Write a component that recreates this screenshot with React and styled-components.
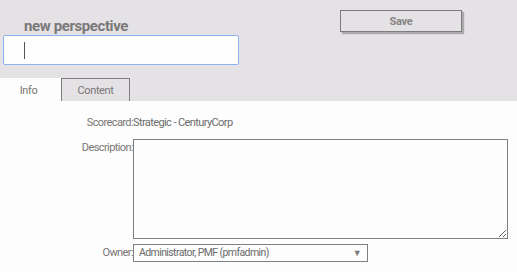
import React from "react";
import styled, { createGlobalStyle } from "styled-components";

const GlobalStyle = createGlobalStyle`
  html, body {
    margin: 0;
    padding: 0;
    background: #fcfdfc;
  }
  body {
    font-family: Roboto, "Liberation Sans", sans-serif;
  }
`;

const Page = styled.div`
  width: 517px;
  height: 272px;
  overflow: hidden;
  background: #fcfdfc;
`;

const Header = styled.header`
  height: 101px;
  background: #e4e2e4;
  display: flex;
  flex-direction: column;
`;

const TopRow = styled.div`
  display: flex;
  align-items: flex-start;
`;

const NameBlock = styled.div`
  display: flex;
  flex-direction: column;
  padding: 17px 0 0 3px;
`;

const Title = styled.h1`
  margin: 0 0 0 21px;
  font-size: 15px;
  line-height: 18px;
  font-weight: 700;
  letter-spacing: -0.4px;
  color: #7a7878;
`;

const NameField = styled.div`
  box-sizing: border-box;
  width: 236px;
  height: 30px;
  border: 1px solid #8db3ee;
  border-radius: 2px;
  background: #fdfefd;
  display: flex;
  align-items: center;
  padding-left: 20px;
`;

const Caret = styled.span`
  display: block;
  width: 1px;
  height: 17px;
  background: #555;
`;

const SaveButton = styled.button`
  box-sizing: border-box;
  margin: 10px 0 0 101px;
  width: 122px;
  height: 22px;
  border: 1px solid #7d7d7d;
  background: #e4e2e4;
  box-shadow: 2px 2px 1px rgba(0, 0, 0, 0.25);
  font-family: Roboto, "Liberation Sans", sans-serif;
  font-size: 11px;
  font-weight: 700;
  letter-spacing: -0.3px;
  color: #858585;
  padding: 0;
`;

const Tabs = styled.nav`
  display: flex;
  margin-top: auto;
  height: 23px;
`;

const Tab = styled.div`
  box-sizing: border-box;
  width: ${({ $w }) => $w}px;
  display: flex;
  align-items: center;
  justify-content: center;
  padding: 1px ${({ $active }) => ($active ? 4 : 0)}px 0 0;
  font-size: 11px;
  letter-spacing: -0.4px;
  color: #7a7777;
  background: ${({ $active }) => ($active ? "#fcfdfc" : "#e4e2e4")};
  border: ${({ $active }) => ($active ? "none" : "1px solid #7f7f7f")};
  border-bottom: none;
`;

const Form = styled.div`
  display: grid;
  grid-template-columns: 133px auto;
  justify-content: start;
  padding-top: 15px;
  font-size: 11px;
  line-height: 14px;
  letter-spacing: -0.6px;
`;

const Label = styled.div`
  text-align: right;
  color: #7a7676;
  padding-top: ${({ $top }) => $top || 0}px;
  margin-top: ${({ $gap }) => $gap || 0}px;
  align-self: ${({ $center }) => ($center ? "center" : "start")};
`;

const Value = styled.div`
  color: #6c6c6c;
`;

const Description = styled.textarea`
  box-sizing: border-box;
  display: block;
  margin-top: 9px;
  width: 375px;
  height: 100px;
  border: 1px solid #7f7f7f;
  background: #fcfdfc;
  resize: both;
  padding: 2px;
`;

const SelectBox = styled.div`
  box-sizing: border-box;
  margin-top: 5px;
  width: 235px;
  height: 18px;
  border: 1px solid #7f7f7f;
  display: flex;
  align-items: center;
  justify-content: space-between;
  padding: 0 6px 0 5px;
  font-size: 10.5px;
  color: #6a6a6a;
  letter-spacing: -0.6px;
`;

const Arrow = styled.span`
  font-size: 9px;
  color: #7a7a7a;
`;

export default function App() {
  return (
    <Page>
      <GlobalStyle />
      <Header>
        <TopRow>
          <NameBlock>
            <Title>new perspective</Title>
            <NameField>
              <Caret />
            </NameField>
          </NameBlock>
          <SaveButton>Save</SaveButton>
        </TopRow>
        <Tabs>
          <Tab $w={61} $active>Info</Tab>
          <Tab $w={69}>Content</Tab>
        </Tabs>
      </Header>
      <Form>
        <Label>Scorecard:</Label>
        <Value>Strategic - CenturyCorp</Value>
        <Label $top={2} $gap={9}>Description:</Label>
        <Description />
        <Label $center $gap={5}>Owner:</Label>
        <SelectBox>
          <span>Administrator, PMF (pmfadmin)</span>
          <Arrow>▼</Arrow>
        </SelectBox>
      </Form>
    </Page>
  );
}
